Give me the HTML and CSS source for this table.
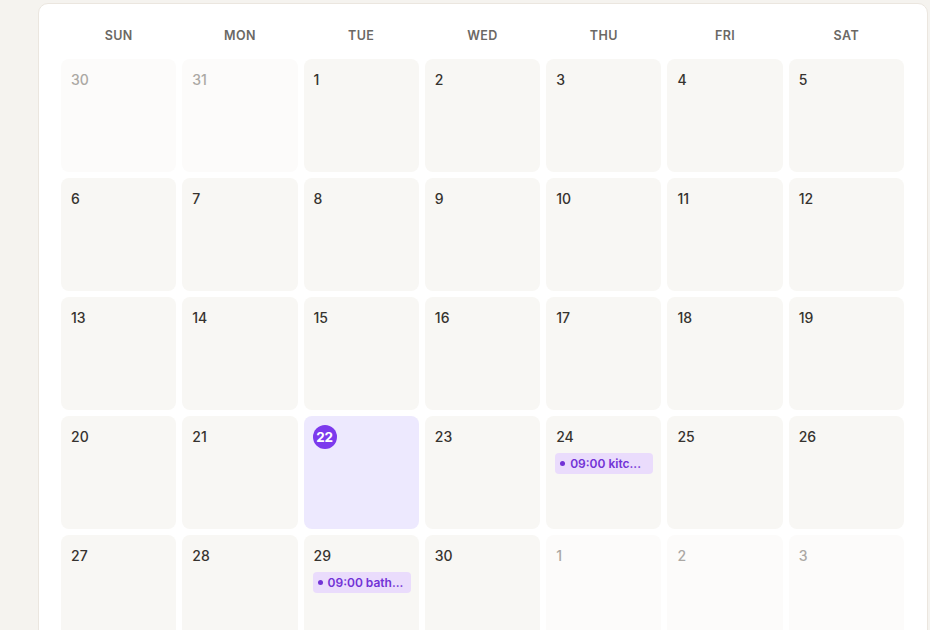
FILE: index.html
```html
<!DOCTYPE html>
<html lang="en">
<head>
<meta charset="utf-8">
<title>Calendar</title>
<link rel="stylesheet" href="styles.css">
</head>
<body>
<div class="page">
  <section class="card">
    <div class="weekdays">
      <div class="wd">SUN</div><div class="wd">MON</div><div class="wd">TUE</div><div class="wd">WED</div><div class="wd">THU</div><div class="wd">FRI</div><div class="wd">SAT</div>
    </div>
    <div class="grid">
      <div class="cell other"><span class="num">30</span></div>
      <div class="cell other"><span class="num">31</span></div>
      <div class="cell"><span class="num">1</span></div>
      <div class="cell"><span class="num">2</span></div>
      <div class="cell"><span class="num">3</span></div>
      <div class="cell"><span class="num">4</span></div>
      <div class="cell"><span class="num">5</span></div>

      <div class="cell"><span class="num">6</span></div>
      <div class="cell"><span class="num">7</span></div>
      <div class="cell"><span class="num">8</span></div>
      <div class="cell"><span class="num">9</span></div>
      <div class="cell"><span class="num">10</span></div>
      <div class="cell"><span class="num">11</span></div>
      <div class="cell"><span class="num">12</span></div>

      <div class="cell"><span class="num">13</span></div>
      <div class="cell"><span class="num">14</span></div>
      <div class="cell"><span class="num">15</span></div>
      <div class="cell"><span class="num">16</span></div>
      <div class="cell"><span class="num">17</span></div>
      <div class="cell"><span class="num">18</span></div>
      <div class="cell"><span class="num">19</span></div>

      <div class="cell"><span class="num">20</span></div>
      <div class="cell"><span class="num">21</span></div>
      <div class="cell today"><span class="num today-num">22</span></div>
      <div class="cell"><span class="num">23</span></div>
      <div class="cell"><span class="num">24</span>
        <div class="event"><span class="dot"></span><span class="ev-text">09:00 kitc...</span></div>
      </div>
      <div class="cell"><span class="num">25</span></div>
      <div class="cell"><span class="num">26</span></div>

      <div class="cell"><span class="num">27</span></div>
      <div class="cell"><span class="num">28</span></div>
      <div class="cell"><span class="num">29</span>
        <div class="event"><span class="dot"></span><span class="ev-text">09:00 bath...</span></div>
      </div>
      <div class="cell"><span class="num">30</span></div>
      <div class="cell other"><span class="num">1</span></div>
      <div class="cell other"><span class="num">2</span></div>
      <div class="cell other"><span class="num">3</span></div>
    </div>
  </section>
</div>
</body>
</html>
```

FILE: styles.css
```css
* { box-sizing: border-box; }

html, body {
  margin: 0;
  padding: 0;
  background: #f5f3ef;
  font-family: Inter, "Noto Sans", "Liberation Sans", sans-serif;
  overflow: hidden;
}

.page {
  padding: 3px 2px 0 38px;
  height: 630px;
}

.card {
  background: #ffffff;
  border: 1px solid #ebe6df;
  border-radius: 10px;
  padding: 19px 23px 20px 22px;
  min-height: 700px;
}

.weekdays {
  display: grid;
  grid-template-columns: repeat(7, 1fr);
  column-gap: 6px;
  margin-bottom: 10px;
}

.wd {
  text-align: center;
  line-height: 26px;
  font-size: 12.5px;
  font-weight: 600;
  letter-spacing: 0.4px;
  color: #6b6864;
}

.grid {
  display: grid;
  grid-template-columns: repeat(7, 1fr);
  grid-auto-rows: 113px;
  gap: 6px;
}

.cell {
  background: #f8f7f4;
  border-radius: 8px;
  padding: 11px 9px 10px 9px;
  display: flex;
  flex-direction: column;
  align-items: flex-start;
  min-width: 0;
}

.cell.other {
  background: #fcfbfa;
}

.num {
  font-size: 14px;
  line-height: 20px;
  font-weight: 500;
  color: #36332f;
  padding-left: 1px;
}

.other .num {
  color: #aba8a4;
}

.cell.today {
  background: #ede9fe;
}

.today-num {
  width: 24px;
  height: 24px;
  margin: -2px 0 -2px 0;
  padding: 0;
  border-radius: 50%;
  background: #7c3aed;
  color: #ffffff;
  font-weight: 700;
  font-size: 13.5px;
  line-height: 24px;
  text-align: center;
  letter-spacing: -0.3px;
}

.event {
  margin-top: 6px;
  width: 98px;
  height: 21px;
  background: #eadcfc;
  border-radius: 4px;
  display: flex;
  align-items: center;
  gap: 5px;
  padding: 0 6px 0 5px;
  color: #7233d6;
  font-size: 12px;
  font-weight: 600;
  overflow: hidden;
}

.dot {
  flex: none;
  width: 5px;
  height: 5px;
  border-radius: 50%;
  background: #7233d6;
}

.ev-text {
  min-width: 0;
  white-space: nowrap;
}
```
